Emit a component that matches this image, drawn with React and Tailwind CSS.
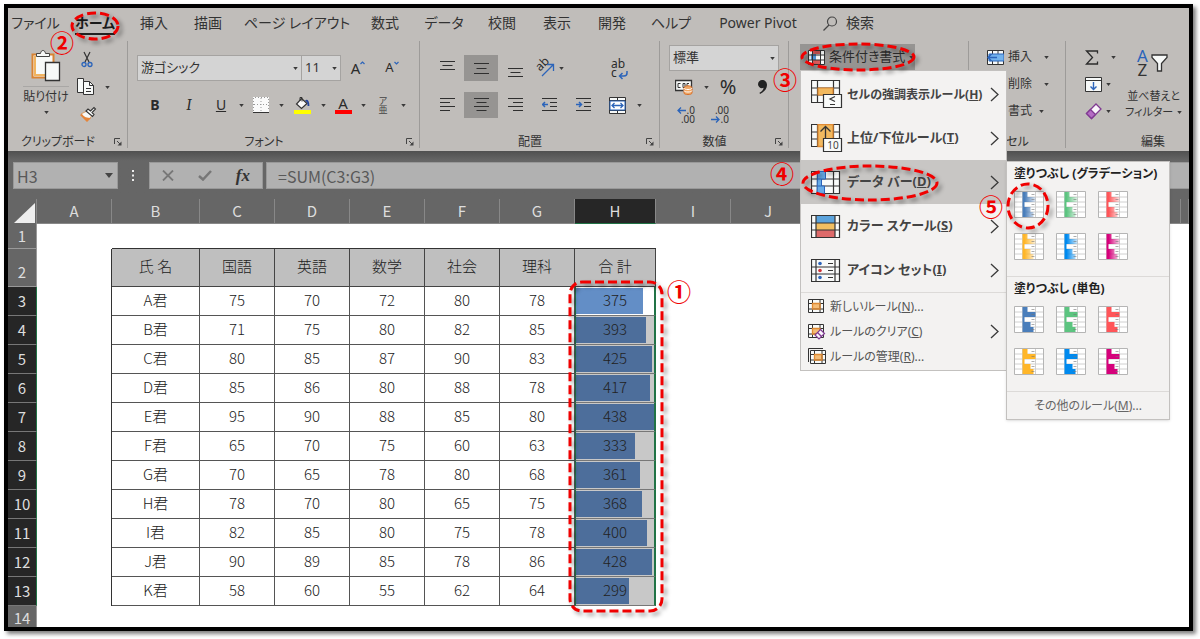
import React from 'react';
import clsx from 'clsx';

const TABS = [
    { label: 'ファイル', width: 'w-[55px]' },
    { label: 'ホーム', width: 'w-16', active: true },
    { label: '挿入', width: 'w-[54px]' },
    { label: '描画', width: 'w-[54px]' },
    { label: 'ページ レイアウト', width: 'w-[124px]' },
    { label: '数式', width: 'w-[52px]' },
    { label: 'データ', width: 'w-[66px]' },
    { label: '校閲', width: 'w-[50px]' },
    { label: '表示', width: 'w-[60px]' },
    { label: '開発', width: 'w-[50px]' },
    { label: 'ヘルプ', width: 'w-[68px]' },
    { label: 'Power Pivot', width: 'w-[106px]' },
];

const COLUMNS = [
    ['A', 'w-[75px]'], ['B', 'w-[88px]'], ['C', 'w-[75px]'], ['D', 'w-[75px]'],
    ['E', 'w-[75px]'], ['F', 'w-[75px]'], ['G', 'w-[75px]'], ['H', 'w-[81px]'],
    ['I', 'w-[75px]'], ['J', 'w-[75px]'], ['K', 'w-[75px]'], ['L', 'w-[75px]'],
    ['M', 'w-[75px]'], ['N', 'w-[75px]'], ['O', 'w-[75px]'], ['', ''],
];

const HEADINGS = ['氏 名', '国語', '英語', '数学', '社会', '理科', '合 計'];

const STUDENTS = [
    ['A君', 75, 70, 72, 80, 78, 375],
    ['B君', 71, 75, 80, 82, 85, 393],
    ['C君', 80, 85, 87, 90, 83, 425],
    ['D君', 85, 86, 80, 88, 78, 417],
    ['E君', 95, 90, 88, 85, 80, 438],
    ['F君', 65, 70, 75, 60, 63, 333],
    ['G君', 70, 65, 78, 80, 68, 361],
    ['H君', 78, 70, 80, 65, 75, 368],
    ['I君', 82, 85, 80, 75, 78, 400],
    ['J君', 90, 89, 85, 78, 86, 428],
    ['K君', 58, 60, 55, 62, 64, 299],
];

const MAX_TOTAL = 438;

const BAR_COLORS = ['#4a7ebb', '#5cc480', '#ff5558', '#ffb628', '#008aef', '#d6007b'];
const BAR_NAMES = ['青', '緑', '赤', 'オレンジ', '水色', '紫'];

const Caret = ({ className }) => (
    <svg viewBox="0 0 6 4" className={clsx('h-[3px] w-[5px] shrink-0', className)} aria-hidden="true">
        <path d="M0 0h6L3 4z" fill="#3a3a3a" />
    </svg>
);

const CaretButton = ({ label, width = 'w-[10px]' }) => (
    <button aria-label={label} className={clsx('flex h-[26px] items-center justify-center', width)}>
        <Caret />
    </button>
);

const Tool = ({ label, width = 'w-[34px]', active, children }) => (
    <button
        aria-label={label}
        className={clsx('flex h-[26px] shrink-0 items-center justify-center text-[#2b2b2b]', width, active && 'bg-[#969492]')}
    >
        {children}
    </button>
);

const Group = ({ name, label, width, launcher, last, children }) => (
    <section aria-label={name || label} className={clsx('relative flex shrink-0 flex-col', width)}>
        <div className="h-[90px]">{children}</div>
        <div className="flex h-5 items-center pt-[2px] text-xs text-[#333]">
            <span className="flex-1 text-center">{label}</span>
            {launcher && (
                <button aria-label={`${label}の設定`} className="flex w-5 justify-center">
                    <svg width="8" height="8" viewBox="0 0 8 8" fill="none" stroke="#444">
                        <path d="M.5 6V.5H6M3 3l3 3" />
                        <path d="M7.500 3.500v4h-4z" fill="#444" stroke="none" />
                    </svg>
                </button>
            )}
        </div>
        {!last && <div className="absolute top-0 right-0 h-[107px] w-px bg-[#9d9b99]" />}
    </section>
);

/* ---------- ribbon icons ---------- */

const PasteIcon = () => (
    <svg width="30" height="34" viewBox="0 0 30 34" fill="none">
        <path d="M1.500 5.500h21v23h-21z" fill="#f7f9f8" stroke="#d98332" strokeWidth="2" />
        <path d="M4 7v19h10" stroke="#f1b45f" strokeWidth="2" />
        <path d="M5.500 7.500v-3h4c.3-2 1.300-3 2.500-3s2.200 1 2.500 3h4v3z" fill="#f7f9f8" stroke="#444" />
        <path d="M14.500 13.500h14v18h-14z" fill="#f7f9f8" stroke="#333" strokeWidth="1.300" />
    </svg>
);

const CutIcon = () => (
    <svg width="12" height="17" viewBox="0 0 12 17" fill="none">
        <path d="M3 1l5 10M9 1L4 11" stroke="#333" strokeWidth="1.200" />
        <circle cx="3" cy="13.500" r="2" stroke="#2b64ba" strokeWidth="1.300" />
        <circle cx="9" cy="13.500" r="2" stroke="#2b64ba" strokeWidth="1.300" />
    </svg>
);

const CopyIcon = () => (
    <svg width="18" height="18" viewBox="0 0 18 18" stroke="#333" fill="#f7f9f8">
        <path d="M.5.500h6v14h-6z" />
        <path d="M6.500 3.500h6l4 4v9h-10z" />
        <path d="M12.500 3.500v4h4M9 10.500h5M9 13.500h5" fill="none" />
    </svg>
);

const BrushIcon = () => (
    <svg width="18" height="17" viewBox="0 0 18 17" fill="none">
        <path d="M2 8l6 7c2-1 4-4 5-6L8 5z" fill="#f7f9f8" stroke="#d98332" strokeWidth=".7" />
        <path d="M1 9l7 7 4-4c-4 0-7-1-9-4z" fill="#e5853a" />
        <path d="M7 5l6.500 5.500 1.500-2-2-2 3.500-3.500-1.500-1.500L11.500 5 9 3z" fill="#f7f9f8" stroke="#333" strokeWidth="1.100" />
    </svg>
);

const BordersIcon = () => (
    <svg width="16" height="17" viewBox="0 0 16 17" fill="none">
        <path d="M0 0h16v15H0z" fill="#fafafa" />
        <path d="M.5 14V.5h15V14M8 1v13M1 7.500h14" stroke="#999" strokeDasharray="1 2" />
        <path d="M0 15.500h16" stroke="#333" />
    </svg>
);

const FillIcon = () => (
    <svg width="18" height="18" viewBox="0 0 18 18" fill="none">
        <path d="M8.500 2.500L14 7.500 8.500 12.500 3.500 8z" fill="#fafafa" stroke="#333" strokeWidth="1.200" />
        <path d="M7 5V1.500h2v4" stroke="#333" />
        <path d="M12.500 5c2-1 3 1 3 5" stroke="#24449a" strokeWidth="1.800" />
        <path d="M1 14h17v4H1z" fill="#ff0" />
    </svg>
);

const FontColorIcon = () => (
    <span className="flex flex-col items-center">
        <span className="text-[15px] leading-[13px]">A</span>
        <span className="h-1 w-[17px] bg-[#f00]" />
    </span>
);

const LINES = {
    top: 'M0 1.500h15M2.500 5.500h10M0 9.500h15',
    middle: 'M0 3.500h15M2.500 8.500h10M0 13.500h15',
    bottom: 'M0 8.500h15M2.500 12.500h10M0 16.500h15',
    left: 'M0 1.500h15M0 5.500h10M0 9.500h15M0 13.500h10',
    center: 'M0 1.500h15M2.500 5.500h10M0 9.500h15M2.500 13.500h10',
    right: 'M0 1.500h15M5 5.500h10M0 9.500h15M5 13.500h10',
    indent: 'M0 1.500h15M8 5.500h7M8 9.500h7M0 13.500h15',
};

const LinesIcon = ({ kind }) => (
    <svg width="15" height="17" viewBox="0 0 15 17" stroke="#2f2f2f" strokeWidth="1.200" fill="none">
        <path d={LINES[kind]} />
    </svg>
);

const IndentIcon = ({ out }) => (
    <svg width="15" height="17" viewBox="0 0 15 17" stroke="#2f2f2f" strokeWidth="1.200" fill="none">
        <path d={LINES.indent} />
        <path d={out ? 'M6 7.500H1M3 5L.5 7.500 3 10' : 'M0 7.500h5M3 5l2.500 2.500L3 10'} stroke="#2b64ba" strokeWidth="1.500" />
    </svg>
);

const OrientationIcon = () => (
    <span className="relative flex h-5 w-5 items-center">
        <span className="absolute -top-1 left-0 -rotate-45 text-[12px] leading-5">ab</span>
        <svg className="absolute inset-0" width="20" height="20" viewBox="0 0 20 20" fill="none" stroke="#2b64ba" strokeWidth="1.300">
            <path d="M7 18L18 7M12 6.500h6.500V13" />
        </svg>
    </span>
);

const WrapIcon = () => (
    <span className="relative flex w-4 flex-col text-left text-[12px] leading-[9px]">
        <span>ab</span>
        <span>c</span>
        <svg className="absolute -right-px -bottom-1" width="10" height="10" viewBox="0 0 10 10" fill="none" stroke="#2b64ba" strokeWidth="1.500">
            <path d="M9 0v2c0 2-1 3-3 3H2M4.500 2L1.500 5l3 3" />
        </svg>
    </span>
);

const MergeIcon = () => (
    <svg width="17" height="17" viewBox="0 0 17 17" fill="none">
        <path d="M.5.500h16v16H.5z" fill="#f7f9f8" stroke="#333" />
        <path d="M8.500.500v16M0 3.500h17M0 13.500h17" stroke="#333" />
        <path d="M1 4h15v9H1z" fill="#fff" stroke="#2b64ba" />
        <path d="M3 8.500h11M5.500 6L3 8.500 5.500 11M11.500 6L14 8.500 11.500 11" stroke="#2b64ba" strokeWidth="1.300" />
    </svg>
);

const CurrencyIcon = () => (
    <svg width="18" height="16" viewBox="0 0 18 16" fill="none">
        <path d="M.5 1.500h16v10H.5z" fill="#f7f9f8" stroke="#333" strokeWidth="1.300" />
        <path d="M5.500 4.500H3v4h2.500M8 4.500h2v4H8zM12 8V4.500h2" stroke="#333" />
        <path d="M9 9c0-3 8-3 8 0v5c0 2-8 2-8 0z" fill="#f0a765" stroke="#d8702a" />
        <path d="M9 9c0 2 8 2 8 0M9 11.500c0 2 8 2 8 0" stroke="#fff" />
    </svg>
);

const DecimalIcon = ({ more }) => (
    <span className="relative flex w-[18px] flex-col text-right text-[10px] leading-[9px] text-[#333]">
        <span>{more ? '.0' : '.00'}</span>
        <span>{more ? '.00' : '.0'}</span>
        <svg className={clsx('absolute left-0', more ? 'top-0' : 'bottom-0')} width="9" height="9" viewBox="0 0 9 9" fill="none" stroke="#2b64ba" strokeWidth="1.300">
            <path d={more ? 'M9 4.500H1M4 1.500l-3 3 3 3' : 'M0 4.500h8M5 1.500l3 3-3 3'} />
        </svg>
    </span>
);

const ConditionalIcon = () => (
    <svg width="17" height="15" viewBox="0 0 17 15" fill="none">
        <path d="M.5.500h16v14H.5z" fill="#f7f9f8" />
        <path d="M4 0h8v4H4zM4 10h8v5H4z" fill="#dd5a5a" />
        <path d="M3 4h5v6H3z" fill="#4f94d8" />
        <path d="M.5.500h16v14H.5zM4.500.500v14M12.500.500v14M.5 5h16M.5 10h16" stroke="#333" />
    </svg>
);

const InsertCellsIcon = () => (
    <svg width="17" height="15" viewBox="0 0 17 15" fill="none">
        <path d="M.5.500h16v14H.5z" fill="#f7f9f8" stroke="#333" />
        <path d="M5.500 0v15M11 0v15" stroke="#333" />
        <path d="M2 4h15v7H2z" fill="#72b2ec" stroke="#2b64ba" />
        <path d="M10 7.500H1M4.500 4L1 7.500 4.500 11" stroke="#2b64ba" strokeWidth="1.500" />
    </svg>
);

const SigmaIcon = () => (
    <svg width="14" height="15" viewBox="0 0 14 15" fill="none" stroke="#2b2b2b" strokeWidth="1.300">
        <path d="M12.500 3.500V1H1.500l6 6.500-6 6.500h11v-2.500" />
    </svg>
);

const FillDownIcon = () => (
    <svg width="17" height="15" viewBox="0 0 17 15" fill="none">
        <path d="M.5.500h16v14H.5z" fill="#f7f9f8" stroke="#333" />
        <path d="M.5 3.500h16" stroke="#333" />
        <path d="M8.500 5v7.500M5.500 9.500l3 3 3-3" stroke="#2b64ba" strokeWidth="1.400" />
    </svg>
);

const EraserIcon = () => (
    <svg width="17" height="17" viewBox="0 0 17 17" fill="none" stroke="#803a92" strokeWidth="1.300">
        <path d="M11 1l5 5L6.500 15.500l-5-5z" fill="#faf6fb" />
        <path d="M5.500 6.500l5 5-4 4-5-5z" fill="#b46cc4" />
    </svg>
);

const FunnelIcon = () => (
    <svg width="17" height="18" viewBox="0 0 17 18" fill="#f7f9f8" stroke="#333" strokeWidth="1.300">
        <path d="M1 1h15v2.500L10.500 9.500V17h-4V9.500L1 3.500z" />
    </svg>
);

/* ---------- menu icons ---------- */

const SheetIcon = ({ lines = 'M6.500.500v22M22.500.500v22', height = 23, overlay, children }) => (
    <svg width="32" height={height} viewBox={`0 0 32 ${height}`} fill="none" className="shrink-0">
        <path d="M.5.500h28v22H.5z" fill="#f9fbfa" />
        {children}
        <path d={`M.5.500h28v22H.5zM.5 8h28M.5 15h28${lines}`} stroke="#333" strokeWidth="1.200" />
        {overlay}
    </svg>
);

const HighlightIcon = () => (
    <SheetIcon
        height={29}
        overlay={
            <g stroke="#333" strokeWidth="1.200">
                <path d="M7 8h15v7H7z" fill="#f1b95f" stroke="#e08a33" />
                <path d="M12.500 14.500h18v13h-18z" fill="#f9fbfa" />
                <path d="M24 16.500l-5 2.500 5 2.500M19 24.500h5" />
            </g>
        }
    />
);

const TopBottomIcon = () => (
    <span className="relative shrink-0">
        <SheetIcon
            height={29}
            overlay={
                <g stroke="#333" strokeWidth="1.300">
                    <path d="M7 .5h15v22H7z" fill="#f1b95f" stroke="#e08a33" />
                    <path d="M14.500 20V2.500M9.500 7.500l5-5 5 5" />
                    <path d="M12.500 14.500h18v13h-18z" fill="#f9fbfa" strokeWidth="1.200" />
                </g>
            }
        />
        <span className="absolute top-[15px] left-[13px] w-[18px] text-center text-[10px] leading-3 font-normal">10</span>
    </span>
);

const DataBarIcon = () => (
    <SheetIcon overlay={<path d="M6.500.500h8V8h-4v7h3v7.500h-7.500zM6.500 8h4M6.500 15h4" fill="#68ace8" stroke="#2b64ba" />} />
);

const ColorScaleIcon = () => (
    <SheetIcon lines="M5 .5v22M24 .5v22">
        <path d="M5 .5h19V8H5z" fill="#5ba3dc" />
        <path d="M5 8h19v7H5z" fill="#f1bf62" />
        <path d="M5 15h19v7.500H5z" fill="#dd6a6a" />
    </SheetIcon>
);

const IconSetIcon = () => (
    <SheetIcon lines="M5 .5v22M24 .5v22M17 4.500h5M17 11.500h5M17 18.500h5">
        <circle cx="9" cy="4.500" r="1.800" fill="#2b64ba" />
        <circle cx="9" cy="11.500" r="1.800" fill="#d13438" />
        <circle cx="9" cy="18.500" r="1.800" fill="#2b64ba" />
    </SheetIcon>
);

const RuleIcon = ({ kind }) => (
    <svg width="17" height="15" viewBox="0 0 17 15" fill="none" className="shrink-0 overflow-visible">
        {kind === 'manage' && <path d="M.5 13V-.5H15" stroke="#333" />}
        <g transform={kind === 'manage' ? 'translate(2 1)' : undefined}>
            <path d="M.5.500h15v13H.5z" fill="#f9fbfa" />
            <path d="M4.500 4.500h8v5.500h-8z" fill="#f5bd77" />
            <path d="M.5.500h15v13H.5zM4.500.500v13M12 .5v13M.5 4.500h15M.5 10h15" stroke="#333" />
            <path d="M4.500 4.500h7.500v5.500H4.500z" stroke="#e08a33" strokeWidth="1.300" />
        </g>
        {kind === 'clear' && (
            <g stroke="#803a92" strokeWidth="1.200">
                <path d="M12.500 5.500l4 4-5.500 5.500-4-4z" fill="#faf6fb" />
                <path d="M9.500 8.500l4 4" />
            </g>
        )}
    </svg>
);

const Chevron = () => (
    <svg width="9" height="15" viewBox="0 0 9 15" fill="none" stroke="#3a3a3a" strokeWidth="1.300" className="ml-auto shrink-0">
        <path d="M1 1l7 6.500L1 14" />
    </svg>
);

/* One gallery thumbnail: five bars on a small sheet */
const BarThumb = ({ color, gradient }) => {
    const id = `bar-${color.slice(1)}`;
    const bars = [5, 13, 2, 8, 11];
    return (
        <svg width="30" height="27" viewBox="0 0 30 27" fill="none">
            <defs>
                <linearGradient id={id} gradientUnits="userSpaceOnUse" x1="8" x2="21" y1="0" y2="0">
                    <stop offset="0.200" stopColor={color} />
                    <stop offset="1" stopColor={color} stopOpacity="0.200" />
                </linearGradient>
            </defs>
            <path d="M.5.500h29v26H.5z" fill="#fff" stroke="#b5b5b5" />
            <path d="M8.500 1v25M21.500 1v25M1 6h28M1 11h28M1 16h28M1 21h28" stroke="#d0d0d0" />
            {bars.map((w, i) => (
                <rect key={i} x="8.500" y={1 + i * 5} width={w} height="5" fill={gradient ? `url(#${id})` : color} />
            ))}
            <path d="M17.500 3.500h3M17.500 8.500h3M17.500 13.500h3M17.500 18.500h3M17.500 23.500h3" stroke="#777" strokeOpacity=".6" />
        </svg>
    );
};

/* ---------- ribbon ---------- */

const RibbonTabs = () => (
    <nav className="flex h-[33px] items-center overflow-hidden pb-[3px] text-sm text-[#333]">
        {TABS.map((tab) => (
            <button key={tab.label} className={clsx('flex shrink-0 justify-center whitespace-nowrap', tab.width)}>
                <span className={clsx('h-6 leading-[24px]', tab.active && 'border-b-2 border-[#222] font-bold text-[#1c1c1c]')}>
                    {tab.label}
                </span>
            </button>
        ))}
        <button className="ml-3 flex shrink-0 items-center gap-2">
            <svg width="15" height="15" viewBox="0 0 15 15" fill="none" stroke="#444" strokeWidth="1.200">
                <circle cx="9" cy="5.500" r="4.500" />
                <path d="M6 9L.5 14.500" />
            </svg>
            検索
        </button>
    </nav>
);

const FONT_ACTIONS = [
    { label: '罫線', width: 'w-[30px]', icon: <BordersIcon /> },
    { label: '塗りつぶしの色', width: 'w-8', icon: <FillIcon /> },
    { label: 'フォントの色', width: 'w-[30px]', icon: <FontColorIcon /> },
    {
        label: 'ふりがな',
        width: 'w-[30px]',
        icon: <span className="flex flex-col text-[9px] leading-[9px] text-[#444]"><span>ア</span><span>亜</span></span>,
    },
];

const SelectBox = ({ label, value, className }) => (
    <span className={clsx('relative flex h-[26px] items-center border border-[#a5a3a1] bg-[#d4d4d4]', className)}>
        <select aria-label={label} defaultValue={value} className="h-full w-full appearance-none pl-[3px] text-[13px] text-[#333]">
            <option>{value}</option>
        </select>
        <Caret className="pointer-events-none absolute right-[3px]" />
    </span>
);

const MENU_LARGE = [
    { label: 'セルの強調表示ルール', mnemonic: 'H', icon: <HighlightIcon />, size: 'h-[43px] text-xs' },
    { label: '上位/下位ルール', mnemonic: 'T', icon: <TopBottomIcon />, size: 'h-11 text-[13px]' },
    { label: 'データ バー', mnemonic: 'D', icon: <DataBarIcon />, size: 'h-11 text-[13px]', active: true },
    { label: 'カラー スケール', mnemonic: 'S', icon: <ColorScaleIcon />, size: 'h-11 text-[13px]' },
    { label: 'アイコン セット', mnemonic: 'I', icon: <IconSetIcon />, size: 'h-11 text-[13px]' },
];

const MENU_SMALL = [
    { label: '新しいルール', mnemonic: 'N', kind: 'new', tail: '...' },
    { label: 'ルールのクリア', mnemonic: 'C', kind: 'clear', tail: '', sub: true },
    { label: 'ルールの管理', mnemonic: 'R', kind: 'manage', tail: '...' },
];

const Gallery = ({ title, gradient }) => (
    <div className="border-b border-[#dcdad8] pl-[7px]">
        <h3 className="h-[29px] text-xs leading-[24px] font-bold whitespace-nowrap text-[#222]">{title}</h3>
        <div className="grid h-[85px] w-[114px] grid-cols-3 content-start gap-x-3 gap-y-[15px]">
            {BAR_COLORS.map((color, i) => (
                <button key={color} aria-label={`${BAR_NAMES[i]}のデータ バー`}>
                    <BarThumb color={color} gradient={gradient} />
                </button>
            ))}
        </div>
    </div>
);

const DataBarMenu = () => (
    <div className="absolute top-[90px] left-full z-30 w-[164px] border border-[#c3c1bf] bg-[#f3f2f1] shadow-sm">
        <Gallery title="塗りつぶし (グラデーション)" gradient />
        <Gallery title="塗りつぶし (単色)" />
        <button className="h-[25px] w-full text-center text-xs text-[#666]">
            その他のルール(<u>M</u>)...
        </button>
    </div>
);

const ConditionalMenu = () => (
    <div className="absolute top-[29px] left-[11px] z-20 w-[207px] border border-[#c3c1bf] bg-[#f3f2f1] pt-[2px]">
        {MENU_LARGE.map((item) => (
            <button
                key={item.mnemonic}
                className={clsx('flex w-full items-center pr-[7px] pl-[10px] font-bold text-[#444]', item.size, item.active && 'bg-[#c8c6c4]')}
            >
                {item.icon}
                <span className="ml-1 whitespace-nowrap">{item.label}(<u>{item.mnemonic}</u>)</span>
                <Chevron />
            </button>
        ))}
        <div className="border-t border-[#dcdad8] py-px">
            {MENU_SMALL.map((item) => (
                <button key={item.kind} className="flex h-[25px] w-full items-center pr-[7px] pl-[7px] text-xs text-[#555]">
                    <RuleIcon kind={item.kind} />
                    <span className="ml-[5px] whitespace-nowrap">{item.label}(<u>{item.mnemonic}</u>){item.tail}</span>
                    {item.sub && <Chevron />}
                </button>
            ))}
        </div>
        <DataBarMenu />
    </div>
);

const Ribbon = () => (
    <div className="flex h-[110px]">
        <Group label="クリップボード" width="w-[120px]" launcher>
            <div className="flex pt-2 pl-[14px]">
                <button className="flex w-12 flex-col items-center text-xs text-[#333]">
                    <PasteIcon />
                    <span className="mt-[3px] border-t border-[#a9a7a5] leading-[20px] whitespace-nowrap">貼り付け</span>
                    <Caret className="mt-1" />
                </button>
                <div className="ml-[7px] flex flex-col items-start gap-[10px] pt-[2px]">
                    <button aria-label="切り取り" className="ml-1"><CutIcon /></button>
                    <button aria-label="コピー" className="flex items-center gap-[10px]"><CopyIcon /><Caret /></button>
                    <button aria-label="書式のコピー" className="ml-[2px]"><BrushIcon /></button>
                </div>
            </div>
        </Group>

        <Group label="フォント" width="w-[292px]" launcher>
            <div className="flex items-center pt-[14px] pl-[9px]">
                <SelectBox label="フォント名" value="游ゴシック" className="w-[165px]" />
                <SelectBox label="フォント サイズ" value="11" className="-ml-px w-10" />
                <Tool label="フォント サイズの拡大">
                    <span className="text-[15px]">A</span>
                    <svg width="5" height="14" viewBox="0 0 5 14" fill="none" stroke="#2b64ba" strokeWidth="1.200"><path d="M.5 3l2-2 2 2" /></svg>
                </Tool>
                <Tool label="フォント サイズの縮小">
                    <span className="text-[13px]">A</span>
                    <svg width="5" height="14" viewBox="0 0 5 14" fill="none" stroke="#2b64ba" strokeWidth="1.200"><path d="M.5 1l2 2 2-2" /></svg>
                </Tool>
            </div>
            <div className="mt-[11px] flex items-center pl-[10px] text-sm">
                <Tool label="太字"><b>B</b></Tool>
                <Tool label="斜体"><i className="font-serif text-base">I</i></Tool>
                <Tool label="下線" width="w-[30px]"><u>U</u></Tool>
                <CaretButton label="下線の種類" />
                {FONT_ACTIONS.map((action) => (
                    <React.Fragment key={action.label}>
                        <Tool label={action.label} width={action.width}>{action.icon}</Tool>
                        <CaretButton label={`${action.label}の一覧`} />
                    </React.Fragment>
                ))}
            </div>
        </Group>

        <Group label="配置" width="w-[240px]" launcher>
            <div className="flex items-center pt-[14px] pl-[10px]">
                <Tool label="上揃え"><LinesIcon kind="top" /></Tool>
                <Tool label="上下中央揃え" active><LinesIcon kind="middle" /></Tool>
                <Tool label="下揃え"><LinesIcon kind="bottom" /></Tool>
                <Tool label="方向"><OrientationIcon /><Caret className="ml-1" /></Tool>
                <span className="w-9" />
                <Tool label="折り返して全体を表示する"><WrapIcon /></Tool>
            </div>
            <div className="mt-[11px] flex items-center pl-[10px]">
                <Tool label="左揃え"><LinesIcon kind="left" /></Tool>
                <Tool label="中央揃え" active><LinesIcon kind="center" /></Tool>
                <Tool label="右揃え"><LinesIcon kind="right" /></Tool>
                <Tool label="インデントを減らす"><IndentIcon out /></Tool>
                <Tool label="インデントを増やす"><IndentIcon /></Tool>
                <Tool label="セルを結合して中央揃え"><MergeIcon /></Tool>
                <CaretButton label="結合の種類" />
            </div>
        </Group>

        <Group label="数値" width="w-[129px]" launcher>
            <div className="flex pt-1 pl-[9px]">
                <SelectBox label="表示形式" value="標準" className="w-[110px]" />
            </div>
            <div className="mt-[3px] flex items-center pl-[7px]">
                <Tool label="通貨表示形式"><CurrencyIcon /></Tool>
                <CaretButton label="通貨の種類" />
                <Tool label="パーセント スタイル"><span className="text-[20px]">%</span></Tool>
                <Tool label="桁区切りスタイル">
                    <svg width="9" height="14" viewBox="0 0 9 14" fill="#222"><path d="M4 0c3 0 5 2 5 5 0 4-3 7-7 9l-.5-1.200C4 11.500 5.500 10 5.500 7.800 3 9 0 7 0 4.200 0 2 2 0 4 0z" /></svg>
                </Tool>
            </div>
            <div className="mt-[2px] flex items-center pl-[9px]">
                <Tool label="小数点以下の表示桁数を増やす"><DecimalIcon more /></Tool>
                <Tool label="小数点以下の表示桁数を減らす"><DecimalIcon /></Tool>
            </div>
        </Group>

        <Group name="スタイル" width="w-[180px]">
            <div className="pt-[3px] pl-[11px]">
                <button className="flex h-[26px] w-[115px] items-center bg-[#969492] pl-2 text-[13px] whitespace-nowrap text-[#2b2b2b]">
                    <ConditionalIcon />
                    <span className="ml-1">条件付き書式</span>
                    <Caret className="ml-1" />
                </button>
            </div>
            <ConditionalMenu />
        </Group>

        <Group label="セル" width="w-[97px]">
            <div className="flex flex-col items-start gap-px pt-[3px] pl-[18px] text-xs text-[#333]">
                <button className="flex h-[26px] items-center"><InsertCellsIcon /><span className="ml-1 w-9 text-left">挿入</span><Caret /></button>
                <button className="ml-[17px] flex h-[26px] items-center"><span className="ml-1 w-9 text-left">削除</span><Caret /></button>
                <button className="ml-[17px] flex h-[26px] items-center"><span className="ml-1 w-[31px] text-left">書式</span><Caret /></button>
            </div>
        </Group>

        <Group label="編集" width="w-[174px]" last>
            <div className="flex pt-[3px] pl-[19px] text-[#333]">
                <div className="flex flex-col items-start gap-px">
                    <button aria-label="オート SUM" className="flex h-[26px] items-center gap-3"><SigmaIcon /><Caret /></button>
                    <button aria-label="フィル" className="flex h-[26px] items-center gap-1"><FillDownIcon /><Caret /></button>
                    <button aria-label="クリア" className="flex h-[26px] items-center gap-1"><EraserIcon /><Caret /></button>
                </div>
                <button className="ml-[9px] flex flex-col pt-[6px] text-[11px] leading-4 whitespace-nowrap">
                    <span className="flex h-[38px] items-center pb-3 pl-3">
                        <span className="flex flex-col text-[17px] leading-[14px]"><span className="text-[#2b64ba]">A</span><span>Z</span></span>
                        <span className="ml-[3px]"><FunnelIcon /></span>
                    </span>
                    <span>並べ替えと</span>
                    <span className="flex items-center gap-1">フィルター<Caret /></span>
                </button>
            </div>
        </Group>
    </div>
);

/* ---------- formula bar and sheet ---------- */

const FormulaBar = () => (
    <div className="flex h-12 items-start bg-linear-to-b from-[#505050] to-[#666] to-20% pt-[11px] pl-[5px] font-['Noto_Sans_CJK_JP',sans-serif]">
        <label className="relative flex h-[27px] w-[105px] items-center border border-[#999] bg-[#b1b1b1]">
            <input aria-label="名前ボックス" defaultValue="H3" className="w-full pl-[3px] text-base text-[#595959]" />
            <svg width="8" height="5" viewBox="0 0 8 5" className="absolute right-[4px]"><path d="M0 0h8L4 5z" fill="#444" /></svg>
        </label>
        <svg width="31" height="27" viewBox="0 0 31 27" fill="#eee"><path d="M14 8h2v2h-2zM14 12.500h2v2h-2zM14 17h2v2h-2z" /></svg>
        <div className="flex h-[27px] w-[114px] items-center justify-around border border-[#999] bg-[#b1b1b1]">
            <button aria-label="キャンセル">
                <svg width="12" height="11" viewBox="0 0 12 11" stroke="#777" strokeWidth="1.800"><path d="M1 .5l10 10M11 .5l-10 10" /></svg>
            </button>
            <button aria-label="入力">
                <svg width="14" height="11" viewBox="0 0 14 11" fill="none" stroke="#777" strokeWidth="2.500"><path d="M1 6l4 3.500L13 1" /></svg>
            </button>
            <button className="font-['Liberation_Serif',serif] text-[17px] leading-5 font-bold text-[#333] italic">fx</button>
        </div>
        <input
            aria-label="数式"
            defaultValue="=SUM(C3:G3)"
            className="ml-[3px] h-[27px] min-w-0 flex-1 border border-r-0 border-[#999] bg-[#b1b1b1] pl-[11px] text-base text-[#595959]"
        />
    </div>
);

const RowHead = ({ n, selected, className = 'align-bottom leading-[28px]' }) => (
    <th
        scope="row"
        className={clsx(
            'border-r border-b p-0 text-center text-[15px] font-normal text-[#ddd]',
            className,
            selected ? 'border-r-[#217346] border-b-[#777] bg-[#262626]' : 'border-[#999] bg-[#666]'
        )}
    >
        {n}
    </th>
);

const Sheet = () => (
    <table className="w-full table-fixed border-separate border-spacing-0 bg-white font-['Noto_Sans_CJK_JP',sans-serif] text-[15px] font-light text-[#222]">
        <colgroup>
            <col className="w-[29px]" />
            {COLUMNS.map(([name, width]) => <col key={name} className={width} />)}
        </colgroup>
        <thead>
            <tr className="h-[25px] bg-[#666] text-[#ddd]">
                <td className="border-r border-[#888] p-0 align-bottom">
                    <svg width="22" height="22" viewBox="0 0 22 22" className="ml-auto"><path d="M21 1v20H0z" fill="#eee" /></svg>
                </td>
                {COLUMNS.map(([name]) => (
                    <th
                        key={name}
                        scope="col"
                        className={clsx('border-r border-b p-0 font-normal', name === 'H' ? 'border-r-[#888] border-b-[#217346] bg-[#262626]' : 'border-[#888]')}
                    >
                        {name}
                    </th>
                ))}
            </tr>
        </thead>
        <tbody>
            <tr className="h-[25px]">
                <RowHead n={1} className="leading-[22px]" />
                <td className="border-r border-transparent" />
                <td colSpan={7} className="border-b border-[#333]" />
            </tr>
            <tr className="h-[38px]">
                <RowHead n={2} />
                <td className="border-r border-[#333]" />
                {HEADINGS.map((text) => (
                    <td key={text} className="border-r border-b border-[#444] bg-[#bfbfbf] p-0 pb-[2px] text-center">{text}</td>
                ))}
            </tr>
            {STUDENTS.map((row, r) => (
                <tr key={row[0]} className="h-[29px]">
                    <RowHead n={r + 3} selected />
                    <td className="border-r border-[#333]" />
                    {row.slice(0, 6).map((value, c) => (
                        <td key={c} className="border-r border-b border-[#555] p-0 text-center align-top leading-[25px]">{value}</td>
                    ))}
                    <td className={clsx('border-r-2 border-b border-l border-r-[#217346] border-b-[#777] border-l-[#217346] p-0', r > 0 && 'bg-[#c8c8c8]')}>
                        <div className="grid h-7 items-start pt-px">
                            <div
                                className={clsx('col-start-1 row-start-1 h-[26px]', r > 0 ? 'bg-[#4d6e9b]' : 'bg-[#638ec6]')}
                                style={{ width: `${(row[6] / MAX_TOTAL) * 100}%` }}
                            />
                            <span className="col-start-1 row-start-1 text-center leading-[24px] text-[#222]">{row[6]}</span>
                        </div>
                    </td>
                </tr>
            ))}
            <tr className="h-[25px]">
                <RowHead n={14} className="align-top leading-[24px]" />
            </tr>
        </tbody>
    </table>
);

/* ---------- step marks ---------- */

const RINGS = [
    { cx: 87, cy: 18, rx: 23, ry: 13 },
    { cx: 850, cy: 49, rx: 56, ry: 13 },
    { cx: 862, cy: 175, rx: 67, ry: 17 },
    { cx: 1020, cy: 198, rx: 20, ry: 22 },
];

const STEPS = [
    ['①', 'top-[263px] left-[651px]'],
    ['②', 'top-[14px] left-[34px]'],
    ['③', 'top-[51px] left-[757px]'],
    ['④', 'top-[145px] left-[754px]'],
    ['⑤', 'top-[178px] left-[963px]'],
];

const StepMarks = () => (
    <div className="pointer-events-none absolute inset-0 z-40">
        <svg
            className="h-full w-full drop-shadow-[3px_3px_2px_rgba(0,0,0,0.4)]"
            fill="none"
            stroke="#f00000"
            strokeWidth="3"
            strokeDasharray="9 4"
        >
            {RINGS.map((ring) => <ellipse key={ring.cx} {...ring} />)}
            <rect x="562" y="274" width="92" height="329" rx="12" />
        </svg>
        {STEPS.map(([mark, place]) => (
            <span
                key={mark}
                className={clsx("absolute flex size-10 items-center justify-center font-['Noto_Sans_CJK_JP',sans-serif] text-2xl font-bold text-[#f00000]", place)}
            >
                {mark}
            </span>
        ))}
    </div>
);

const App = () => (
    <div className="h-screen bg-white pt-1 pr-[7px] pb-2 pl-1 font-['Noto_Sans','Noto_Sans_CJK_JP',sans-serif] [font-feature-settings:'palt']" lang="ja">
        <main className="relative h-full overflow-hidden border-4 border-black bg-white shadow-[3px_3px_4px_rgba(0,0,0,0.5)]">
            <header className="bg-[#c0bdba]">
                <RibbonTabs />
                <Ribbon />
            </header>
            <FormulaBar />
            <Sheet />
            <StepMarks />
        </main>
    </div>
);

export default App;
